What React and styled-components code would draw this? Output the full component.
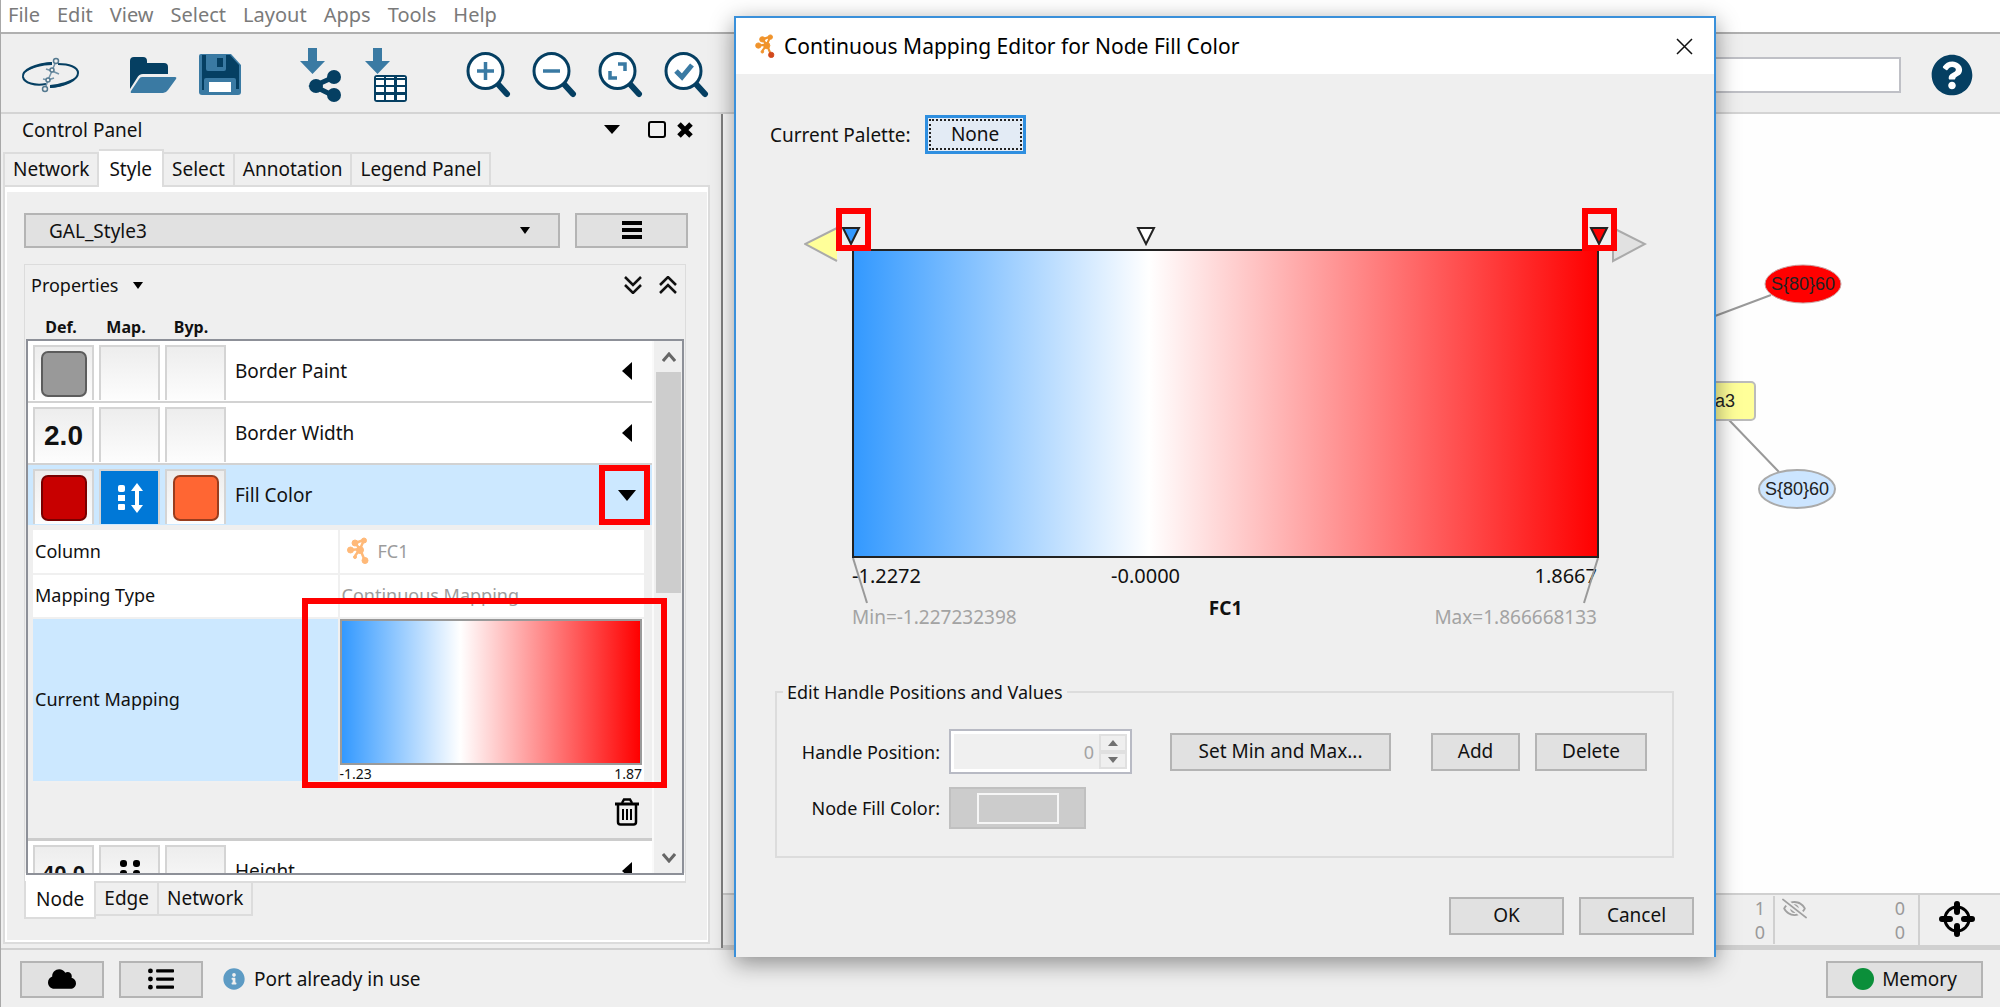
import React from "react";
import styled, { createGlobalStyle, css } from "styled-components";
import { FaCloud, FaListUl, FaInfoCircle, FaQuestionCircle, FaRegEyeSlash } from "react-icons/fa";

const NAVY = "#053f62";
const STEEL = "#3a7aa3";
const FACE = "#efefef";
const LINE = "#dcdcdc";
const GRADIENT = "linear-gradient(to right, #3399ff 0%, #ffffff 39.7%, #ff0000 100%)";

const GlobalStyle = createGlobalStyle`
  *, *::before, *::after { box-sizing: border-box; }
  body { margin: 0; background: ${FACE}; }
  body, button, input, select {
    font-family: "Noto Sans", "Open Sans", sans-serif;
    font-size: 18px;
    line-height: 24px;
    color: #111;
  }
  button, select, input { margin: 0; padding: 0; border-radius: 0; }
  svg { display: block; flex: none; }
`;

const Desktop = styled.div`
  position: relative;
  display: flex;
  flex-direction: column;
  height: 100vh;
  min-height: 1000px;
  border-left: 1px solid #a8a8a8;
  background: ${FACE};
  overflow: hidden;
`;

/* ---------- shared controls ---------- */

const PushButton = styled.button`
  display: flex;
  align-items: center;
  justify-content: center;
  gap: 8px;
  width: ${(p) => (p.$w ? `${p.$w}px` : "auto")};
  height: ${(p) => p.$h || 38}px;
  padding-bottom: 2px;
  border: 2px solid #b4b4b4;
  background: #e1e1e1;
  font-size: 19px;
`;

const PlainButton = styled.button`
  display: flex;
  align-items: center;
  gap: 15px;
  border: 0;
  background: none;
`;

const Highlight = styled.div`
  position: absolute;
  left: ${(p) => p.$left}px;
  top: ${(p) => p.$top}px;
  width: ${(p) => p.$w}px;
  height: ${(p) => p.$h}px;
  border: 6px solid #ff0000;
  pointer-events: none;
  z-index: 2;
`;

/* ---------- menu and toolbar ---------- */

const MenuBar = styled.nav`
  display: flex;
  gap: 17px;
  height: 34px;
  padding: 2px 7px 0;
  background: #fff;
  border-bottom: 2px solid #b0b0b0;
`;

const MenuItem = styled.button`
  border: 0;
  background: none;
  height: 26px;
  font-size: 20px;
  line-height: 26px;
  color: #7a7a7a;
`;

const Toolbar = styled.header`
  display: flex;
  align-items: center;
  height: 80px;
  padding: 3px 27px 0 20px;
  border-bottom: 2px solid #d4d4d4;
`;

const ToolGroup = styled.div`
  display: flex;
  align-items: center;
  gap: ${(p) => p.$gap}px;
  margin-right: ${(p) => p.$after}px;
`;

const SearchBox = styled.input`
  width: 400px;
  height: 36px;
  margin-left: auto;
  margin-right: 30px;
  border: 2px solid #bfc0c6;
  background: #fff;
`;

const HelpIcon = styled(FaQuestionCircle)`
  background: radial-gradient(#fff 55%, transparent 56%);
`;

/* ---------- control panel ---------- */

const Workspace = styled.main`
  display: flex;
  flex: 1;
  min-height: 0;
  border-bottom: 2px solid #d0d0d0;
`;

const Sidebar = styled.aside`
  display: flex;
  flex-direction: column;
  flex: none;
  width: 722px;
  padding: 0 11px 4px 2px;
  border-right: 2px solid #828282;
`;

const PanelHeader = styled.div`
  display: flex;
  align-items: center;
  height: 35px;
  padding: 0 17px 4px 19px;
`;

const PanelTitle = styled.h1`
  flex: 1;
  margin: 0;
  font-size: 19px;
  font-weight: 400;
`;

const HeaderIcons = styled.div`
  display: flex;
  align-items: center;
  gap: ${(p) => p.$gap}px;
`;

const TabStrip = styled.div`
  display: flex;
  align-items: ${(p) => (p.$below ? "flex-start" : "flex-end")};
  z-index: 1;
`;

const Tab = styled.button`
  height: 33px;
  padding: 0 8px;
  border: 2px solid ${LINE};
  border-left-width: ${(p) => (p.$first ? 2 : 0)}px;
  ${(p) => (p.$below ? "border-top: 0;" : "border-bottom: 0;")}
  background: ${FACE};
  white-space: nowrap;
  font-size: 19px;
  line-height: 31px;
  ${(p) =>
    p.$active &&
    css`
      height: 38px;
      padding: 0 10px;
      background: #fff;
      line-height: 32px;
      margin-${p.$below ? "top" : "bottom"}: -2px;
    `}
`;

const TabPage = styled.section`
  display: flex;
  flex-direction: column;
  flex: 1;
  min-height: 0;
  gap: 16px;
  padding: 22px 20px 23px 19px;
  border: 2px solid ${LINE};
  box-shadow: inset 2px 5px 0 #fff, inset -1px -2px 0 #fff;
`;

const StyleRow = styled.div`
  display: flex;
  gap: 15px;
  padding-top: 4px;
`;

const ComboWrap = styled.div`
  display: flex;
  flex: 1;
  position: relative;
`;

const Combo = styled.select`
  appearance: none;
  flex: 1;
  height: 35px;
  padding-left: 23px;
  border: 2px solid #b4b4b4;
  background: #e1e1e1;
  font-size: 19px;
`;

const ComboArrow = styled.span`
  position: absolute;
  right: 30px;
  top: 14px;
  pointer-events: none;
`;

const Burger = styled.span`
  width: 20px;
  height: 18px;
  border-top: 4px solid #000;
  border-bottom: 4px solid #000;
  background: linear-gradient(transparent 3px, #000 3px, #000 7px, transparent 7px);
`;

const PropertyTabs = styled.div`
  display: flex;
  flex-direction: column;
  flex: 1;
  min-height: 0;
`;

const PropertyPage = styled.div`
  display: flex;
  flex-direction: column;
  flex: 1;
  min-height: 0;
  margin-right: 2px;
  padding: 0 1px 6px;
  border: 1px solid ${LINE};
  border-bottom-width: 2px;
  background: linear-gradient(${FACE}, ${FACE}) no-repeat top / 100% calc(100% - 8px), #fff;
`;

const PropertyBar = styled.div`
  display: flex;
  align-items: center;
  justify-content: space-between;
  height: 40px;
  padding: 0 6px 0 5px;
`;

const ColumnHeads = styled.div`
  display: flex;
  align-items: flex-end;
  gap: 5px;
  height: 34px;
  padding-left: 5px;
`;

const ColumnHead = styled.span`
  width: 60px;
  text-align: center;
  font-size: 16px;
  font-weight: 700;
`;

const ListBox = styled.div`
  position: relative;
  display: flex;
  flex: 1;
  min-height: 0;
  border: 2px solid #8d9098;
  background: #fff;
`;

const ListView = styled.div`
  flex: 1;
  min-width: 0;
  overflow: hidden;
`;

const PropertyRow = styled.div`
  display: flex;
  align-items: flex-start;
  gap: 5px;
  height: ${(p) => (p.$selected ? 60 : 62)}px;
  padding: 4px 16px 0 5px;
  background: ${(p) => (p.$selected ? "#cce8ff" : "#fff")};
  border-bottom: ${(p) => (p.$selected ? 0 : 2)}px solid #d2d2d2;
`;

const Cell = styled.button`
  display: flex;
  align-items: center;
  justify-content: center;
  width: 61px;
  height: 55px;
  border: 2px solid #d4d4d4;
  border-bottom: 0;
  background: ${(p) => (p.$on ? "#0078d7" : "linear-gradient(#ededed, #fdfdfd)")};
  font-family: "Liberation Sans", sans-serif;
  font-size: ${(p) => p.$size || 28}px;
  font-weight: 700;
`;

const Swatch = styled.span`
  width: 46px;
  height: 46px;
  border: 2px solid rgba(0, 0, 0, 0.4);
  border-radius: 7px;
  background: ${(p) => p.$color};
`;

const PropertyName = styled.span`
  flex: 1;
  padding-left: 4px;
  font-size: 19px;
  line-height: 52px;
`;

const Toggle = styled.button`
  display: flex;
  justify-content: center;
  align-items: center;
  width: 18px;
  height: 52px;
  border: 0;
  background: none;
`;

const Detail = styled.div`
  height: 316px;
  padding: 5px 8px 0 5px;
  background: ${FACE};
  border-bottom: 3px solid #cccccc;
`;

const MappingTable = styled.table`
  width: 100%;
  table-layout: fixed;
  border-collapse: collapse;
`;

const MapLabel = styled.th`
  height: ${(p) => p.$h}px;
  padding: 0 2px 2px;
  background: ${(p) => (p.$on ? "#cce8ff" : "#fff")};
  border-bottom: 2px solid #f0f0f0;
  font-weight: 400;
  text-align: left;
`;

const MapValue = styled.td`
  padding: 0 2px 2px;
  background: #fff;
  border-left: 2px solid #f0f0f0;
  border-bottom: 2px solid #f0f0f0;
  color: #9c9c9c;
  vertical-align: ${(p) => (p.$top ? "top" : "middle")};
  ${(p) => p.$top && "padding: 0;"}
`;

const Inline = styled.span`
  display: flex;
  align-items: center;
  gap: 8px;
  padding-left: 4px;
`;

const MiniGradient = styled.div`
  height: 146px;
  margin: 0 2px 0 0;
  border: 2px solid #9a9a9a;
  background: ${GRADIENT};
`;

const MiniScale = styled.div`
  display: flex;
  justify-content: space-between;
  height: 16px;
  padding-right: 2px;
  color: #111;
  font-size: 14px;
  line-height: 18px;
`;

const TrashButton = styled.button`
  display: flex;
  margin: 15px 4px 0 auto;
  border: 0;
  background: none;
`;

const Scrollbar = styled.div`
  display: flex;
  flex-direction: column;
  align-items: center;
  width: 30px;
  padding: 11px 1px 10px 2px;
  background: ${FACE};
  border-left: 2px solid #fafafa;
`;

const Thumb = styled.div`
  width: 100%;
  height: 221px;
  margin: 9px 0 auto;
  background: #cdcdcd;
`;

/* ---------- network view ---------- */

const NetworkArea = styled.section`
  display: flex;
  flex-direction: column;
  flex: 1;
  min-width: 0;
`;

const Canvas = styled.div`
  flex: 1;
  min-height: 0;
  background: #fefefe;
  svg { width: 100%; height: 100%; }
  text { font-family: "Liberation Sans", Arial, sans-serif; font-size: 18px; fill: #222; }
`;

const CountBar = styled.div`
  display: flex;
  justify-content: flex-end;
  align-items: center;
  height: 55px;
  border-top: 2px solid #d0d0d0;
  border-bottom: 3px solid #d0d0d0;
  color: #9a9a9a;
`;

const Counts = styled.div`
  display: grid;
  grid-template-columns: 26px 1fr;
  width: ${(p) => p.$w}px;
  padding: 0 ${(p) => p.$pad}px 0 7px;
  border-left: ${(p) => (p.$rule ? 2 : 0)}px solid #d0d0d0;
  text-align: right;
  line-height: 24px;
  svg { grid-row: span 2; }
  span { grid-column: 2; }
`;

const TargetButton = styled.button`
  display: flex;
  align-items: center;
  justify-content: center;
  align-self: stretch;
  width: 82px;
  padding: 0 6px 2px 0;
  border: 0;
  border-left: 2px solid #d0d0d0;
  background: none;
`;

const StatusBar = styled.footer`
  display: flex;
  align-items: center;
  gap: 15px;
  height: 57px;
  padding: 2px 17px 0 19px;
`;

const StatusText = styled.span`
  display: flex;
  align-items: center;
  gap: 9px;
  flex: 1;
  padding: 0 0 2px 5px;
  font-size: 19px;
`;

/* ---------- mapping editor dialog ---------- */

const Dialog = styled.section`
  position: absolute;
  left: 733px;
  top: 16px;
  width: 982px;
  border: 2px solid #3a90da;
  border-bottom: 0;
  background: ${FACE};
  box-shadow: 0 6px 22px rgba(0, 0, 0, 0.42);
  z-index: 5;
`;

const TitleBar = styled.header`
  display: flex;
  align-items: center;
  height: 56px;
  padding: 0 21px 0 19px;
  background: #fff;
`;

const DialogTitle = styled.h2`
  flex: 1;
  margin: 0 0 0 9px;
  font-size: 21px;
  font-weight: 400;
  color: #000;
`;

const PaletteRow = styled.div`
  display: flex;
  align-items: center;
  justify-content: flex-start;
  gap: 14px;
  padding: 41px 34px 0;
  font-size: 19px;
`;

const FocusButton = styled(PushButton)`
  border: 3px solid #2f8fe0;
  background: #e3ebf5;
  outline: 2px dotted #222;
  outline-offset: -6px;
`;

const Editor = styled.div`
  position: relative;
  margin: 95px 115px 0 116px;
`;

const BigGradient = styled.div`
  height: 309px;
  border: 2px solid #222;
  background: ${GRADIENT};
`;

const Handle = styled.button`
  position: absolute;
  left: ${(p) => p.$at};
  top: -23px;
  width: 20px;
  height: 20px;
  margin-left: -10px;
  border: 0;
  background: none;
`;

const EndHandle = styled.button`
  position: absolute;
  top: -22px;
  ${(p) => p.$side}: -48px;
  border: 0;
  background: none;
`;

const Leader = styled.svg`
  position: absolute;
  top: 309px;
  ${(p) => p.$side}: 0;
`;

const ScaleLabels = styled.div`
  position: relative;
  display: flex;
  justify-content: space-between;
  padding: 6px 2px 0 0;
  font-size: 20px;
`;

const MidLabel = styled.span`
  position: absolute;
  left: 39.3%;
  transform: translateX(-50%);
`;

const RangeLabels = styled.div`
  display: flex;
  justify-content: space-between;
  padding: 8px 2px 0 0;
  font-size: 19px;
`;

const RangeLabel = styled.span`
  padding-top: 9px;
  color: #a3a3a3;
`;

const ColumnName = styled.strong`
  font-weight: 700;
`;

const Group = styled.fieldset`
  display: flex;
  flex-direction: column;
  gap: 13px;
  margin: 51px 40px 0 39px;
  padding: 25px 25px 27px 22px;
  border: 2px solid ${LINE};
`;

const GroupTitle = styled.legend`
  padding: 0 4px;
  margin-left: -16px;
`;

const FieldRow = styled.div`
  display: flex;
  align-items: center;
`;

const FieldLabel = styled.label`
  width: 141px;
  margin-right: 9px;
  text-align: right;
`;

const Spinner = styled.div`
  display: flex;
  width: 183px;
  height: 45px;
  margin-right: 38px;
  padding: 3px;
  border: 2px solid #b8bac4;
  background: #fff;
`;

const SpinInput = styled.input`
  flex: 1;
  min-width: 0;
  padding-right: 5px;
  border: 0;
  background: #f0f0f0;
  text-align: right;
  color: #a3a3a3;
`;

const SpinButtons = styled.div`
  display: flex;
  flex-direction: column;
`;

const SpinButton = styled.button`
  display: flex;
  align-items: center;
  justify-content: center;
  flex: 1;
  width: 28px;
  border: 2px solid #e0e0e0;
  background: #efefef;
`;

const PairEnd = styled.div`
  display: flex;
  gap: 15px;
  margin-left: auto;
`;

const ColorButton = styled.button`
  display: flex;
  align-items: center;
  justify-content: center;
  width: 137px;
  height: 42px;
  border: 2px solid #c0c0c0;
  background: #cccccc;
  span { width: 82px; height: 31px; border: 2px solid #f6f6f6; }
`;

const DialogButtons = styled.div`
  display: flex;
  justify-content: flex-end;
  gap: 15px;
  padding: 39px 20px 22px;
`;

/* ---------- drawings ---------- */

const LogoIcon = () => (
  <svg width="60" height="36" viewBox="0 0 60 36" fill="none">
    <path d="M31 6C14 7 1 13 2 20c1 6 12 9 23 7" stroke={NAVY} strokeWidth="2" />
    <path d="M31 5C20 6 8 10 5 15c6-4 16-7 26-7z" fill={NAVY} />
    <path d="M37 7c11 0 20 3 20 9 0 7-13 13-28 14" stroke={NAVY} strokeWidth="2" />
    <path d="M29 31c12-1 22-5 26-11-6 4-16 7-26 8z" fill={NAVY} />
    <path d="M35 4 31 14l-4 9-3 9M31 14l-6-2M31 14l7 3M27 23l6-2M27 23l-5-1" stroke="#7393a8" strokeWidth="1.5" />
    <g fill={FACE} stroke="#54798f" strokeWidth="1.5">
      <circle cx="35" cy="4" r="2.5" />
      <circle cx="31" cy="13" r="2" />
      <circle cx="27" cy="23" r="2" />
      <circle cx="24" cy="32" r="2.5" />
    </g>
  </svg>
);

const FolderIcon = () => (
  <svg width="48" height="38" viewBox="0 0 48 38">
    <path d="M1 33V5q0-4 4-4h9q4 0 4 4v2h17q4 0 4 4v7H14q-4 0-6 4z" fill={NAVY} />
    <path d="M13 21h33q2 0 1 2l-8 11q-2 3-5 3H3q-2 0-1-2l8-12q1-2 3-2z" fill={STEEL} />
  </svg>
);

const SaveIcon = () => (
  <svg width="44" height="43" viewBox="0 0 44 43">
    <path d="M3 1h30l10 11v27q0 3-3 3H4q-3 0-3-3V3q0-2 2-2z" fill={STEEL} />
    <path d="M4 2h4v14q0 2 2 2h16q2 0 2-2V2h4l9 10v24h-3V27q0-2-2-2H8q-2 0-2 2v10H4z" fill={NAVY} />
    <path d="M19 5h6v9h-6z" fill={NAVY} />
    <path d="M8 26h28v14H8z" fill={STEEL} />
    <path d="M11 29h22v10H11z" fill="#fff" />
  </svg>
);

const ImportNetworkIcon = () => (
  <svg width="43" height="56" viewBox="0 0 43 56">
    <path d="M9 1h9v13h8L13.500 27 1 14h8z" fill={STEEL} />
    <path d="M35 30 15 39l20 10" stroke={NAVY} strokeWidth="5" fill="none" />
    <circle cx="35" cy="30" r="7" fill={NAVY} />
    <circle cx="17" cy="39" r="7" fill={NAVY} />
    <circle cx="35" cy="48" r="7" fill={NAVY} />
  </svg>
);

const ImportTableIcon = () => (
  <svg width="44" height="56" viewBox="0 0 44 56">
    <path d="M9 1h9v13h8L13.500 27 1 14h8z" fill={STEEL} />
    <rect x="10" y="28" width="33" height="27" rx="3" fill={NAVY} />
    <g fill="#fff">
      {[12, 22, 33].map((x) => [33, 40, 48].map((y) => <rect key={x + "-" + y} x={x} y={y} width="8" height="5" />))}
      <path d="M12 30h8v1h-8zM22 30h8v1h-8zM33 30h8v1h-8z" />
    </g>
  </svg>
);

const LensIcon = ({ children }) => (
  <svg width="45" height="47" viewBox="0 0 45 47" fill="none">
    <path d="m31 32 10 11" stroke={NAVY} strokeWidth="6" strokeLinecap="round" />
    <circle cx="19.500" cy="20" r="17.500" fill="#fff" stroke={NAVY} strokeWidth="3" />
    <g stroke={STEEL} strokeWidth="3.500">{children}</g>
  </svg>
);

const Tri = ({ dir, w = 12, h = 8, fill = "#000" }) => {
  const shapes = {
    down: `0,0 ${w},0 ${w / 2},${h}`,
    up: `0,${h} ${w},${h} ${w / 2},0`,
    left: `${w},0 ${w},${h} 0,${h / 2}`,
  };
  return (
    <svg width={w} height={h} viewBox={`0 0 ${w} ${h}`}>
      <polygon points={shapes[dir]} fill={fill} />
    </svg>
  );
};

const ChevronPair = ({ up }) => (
  <svg width="20" height="18" viewBox="0 0 20 18" fill="none" stroke="#111" strokeWidth="2.500">
    {up ? <path d="m2 9 8-8 8 8M2 17l8-8 8 8" /> : <path d="m2 1 8 8 8-8M2 9l8 8 8-8" />}
  </svg>
);

const ScrollChevron = ({ up }) => (
  <svg width="14" height="11" viewBox="0 0 14 11" fill="none" stroke="#666" strokeWidth="3">
    <path d={up ? "m1 9 6-7 6 7" : "m1 2 6 7 6-7"} />
  </svg>
);

const TrashIcon = () => (
  <svg width="26" height="28" viewBox="0 0 26 28" fill="none" stroke="#000">
    <path d="M1 6h24" strokeWidth="3" />
    <path d="M8 5l2-3.500h6L18 5" strokeWidth="2.500" />
    <path d="M4 7v17q0 2.500 2.500 2.500h13Q22 26.500 22 24V7" strokeWidth="2.500" />
    <path d="M9 11v11M13 11v11M17 11v11" strokeWidth="2" />
  </svg>
);

const NetworkGlyph = ({ width, height, color, tail }) => (
  <svg width={width} height={height} viewBox="0 0 22 27" fill={color} stroke={color}>
    <path d="m4 13 9-1M8 6l5 6M8 6l9-3M17 3l-4 9M13 12 8 19M13 12l5 12" strokeWidth="2.500" />
    <circle cx="3.500" cy="13" r="3" />
    <circle cx="8" cy="6" r="3" />
    <circle cx="17" cy="3.500" r="2.500" />
    <circle cx="13" cy="13" r="3.500" />
    <circle cx="8" cy="20" r="1.500" />
    <circle cx="18" cy="23.500" r="3" fill={tail || color} stroke={tail || color} />
  </svg>
);

const ContinuousIcon = () => (
  <svg width="26" height="30" viewBox="0 0 26 30" fill="#fff">
    <rect x="1" y="2" width="7" height="7" rx="2" />
    <rect x="1" y="12" width="7" height="6" />
    <rect x="1" y="21" width="7" height="6" rx="1" />
    <path d="M20 0l6 8h-4v14h4l-6 8-6-8h4V8h-4z" />
  </svg>
);

const DiscreteIcon = () => (
  <svg width="22" height="28" viewBox="0 0 22 28" fill="#000">
    {[0, 10, 20].map((y) => (
      <g key={y}>
        <rect x="1" y={y} width="7" height="7" rx="3" />
        <rect x="14" y={y} width="7" height="7" rx="3" />
      </g>
    ))}
  </svg>
);

const TargetIcon = () => (
  <svg width="36" height="36" viewBox="0 0 36 36" fill="none" stroke="#000">
    <circle cx="18" cy="18" r="12" strokeWidth="3" />
    <path d="M18 3v8M18 25v8M3 18h8M25 18h8" strokeWidth="6" strokeLinecap="round" />
  </svg>
);

const HandleMark = ({ fill }) => (
  <svg width="20" height="20" viewBox="0 0 20 20">
    <path d="M2 2h16L10 18z" fill={fill} stroke="#222" strokeWidth="2" />
  </svg>
);

/* ---------- sections ---------- */

const menus = ["File", "Edit", "View", "Select", "Layout", "Apps", "Tools", "Help"];

function ControlPanel() {
  return (
    <Sidebar>
      <PanelHeader>
        <PanelTitle>Control Panel</PanelTitle>
        <HeaderIcons $gap={11}>
          <PlainButton aria-label="Panel menu"><Tri dir="down" w={16} h={9} /></PlainButton>
          <PlainButton aria-label="Float panel">
            <svg width="35" height="18" viewBox="0 0 35 18" fill="none" stroke="#000">
              <rect x="18" y="1" width="16" height="15" rx="2" strokeWidth="2" />
            </svg>
          </PlainButton>
          <PlainButton aria-label="Close panel">
            <svg width="16" height="16" viewBox="0 0 16 16"><path d="M2 2l12 12M14 2 2 14" stroke="#000" strokeWidth="5" /></svg>
          </PlainButton>
        </HeaderIcons>
      </PanelHeader>
      <TabStrip>
        {["Network", "Style", "Select", "Annotation", "Legend Panel"].map((t, i) => (
          <Tab key={t} $first={i === 0} $active={t === "Style"}>{t}</Tab>
        ))}
      </TabStrip>
      <TabPage>
        <StyleRow>
          <ComboWrap>
            <Combo aria-label="Style" defaultValue="GAL_Style3"><option>GAL_Style3</option></Combo>
            <ComboArrow><Tri dir="down" w={10} h={7} /></ComboArrow>
          </ComboWrap>
          <PushButton $w={113} $h={35} aria-label="Style options"><Burger /></PushButton>
        </StyleRow>
        <PropertyTabs>
          <PropertyPage>
            <PropertyBar>
              <PlainButton>Properties <Tri dir="down" w={10} h={7} /></PlainButton>
              <HeaderIcons $gap={15}>
                <PlainButton aria-label="Expand all"><ChevronPair /></PlainButton>
                <PlainButton aria-label="Collapse all"><ChevronPair up /></PlainButton>
              </HeaderIcons>
            </PropertyBar>
            <ColumnHeads>
              <ColumnHead>Def.</ColumnHead>
              <ColumnHead>Map.</ColumnHead>
              <ColumnHead>Byp.</ColumnHead>
            </ColumnHeads>
            <ListBox>
              <ListView>
                <PropertyRow>
                  <Cell aria-label="Border Paint default"><Swatch $color="#999999" /></Cell>
                  <Cell aria-label="Border Paint mapping" />
                  <Cell aria-label="Border Paint bypass" />
                  <PropertyName>Border Paint</PropertyName>
                  <Toggle aria-label="Expand Border Paint"><Tri dir="left" w={10} h={18} /></Toggle>
                </PropertyRow>
                <PropertyRow>
                  <Cell>2.0</Cell>
                  <Cell aria-label="Border Width mapping" />
                  <Cell aria-label="Border Width bypass" />
                  <PropertyName>Border Width</PropertyName>
                  <Toggle aria-label="Expand Border Width"><Tri dir="left" w={10} h={18} /></Toggle>
                </PropertyRow>
                <PropertyRow $selected>
                  <Cell aria-label="Fill Color default"><Swatch $color="#c80000" /></Cell>
                  <Cell $on aria-label="Fill Color mapping"><ContinuousIcon /></Cell>
                  <Cell aria-label="Fill Color bypass"><Swatch $color="#ff6633" /></Cell>
                  <PropertyName>Fill Color</PropertyName>
                  <Toggle aria-label="Collapse Fill Color"><Tri dir="down" w={18} h={11} /></Toggle>
                </PropertyRow>
                <Detail>
                  <MappingTable>
                    <tbody>
                      <tr>
                        <MapLabel $h={44} scope="row">Column</MapLabel>
                        <MapValue>
                          <Inline><NetworkGlyph width={24} height={27} color="#ffb978" />FC1</Inline>
                        </MapValue>
                      </tr>
                      <tr>
                        <MapLabel $h={44} scope="row">Mapping Type</MapLabel>
                        <MapValue>Continuous Mapping</MapValue>
                      </tr>
                      <tr>
                        <MapLabel $h={162} $on scope="row">Current Mapping</MapLabel>
                        <MapValue $top>
                          <MiniGradient />
                          <MiniScale><span>-1.23</span><span>1.87</span></MiniScale>
                        </MapValue>
                      </tr>
                    </tbody>
                  </MappingTable>
                  <TrashButton aria-label="Remove mapping"><TrashIcon /></TrashButton>
                </Detail>
                <PropertyRow>
                  <Cell $size={22}>40.0</Cell>
                  <Cell aria-label="Height mapping"><DiscreteIcon /></Cell>
                  <Cell aria-label="Height bypass" />
                  <PropertyName>Height</PropertyName>
                  <Toggle aria-label="Expand Height"><Tri dir="left" w={10} h={18} /></Toggle>
                </PropertyRow>
              </ListView>
              <Scrollbar>
                <ScrollChevron up />
                <Thumb />
                <ScrollChevron />
              </Scrollbar>
              <Highlight $left={571} $top={124} $w={51} $h={60} />
              <Highlight $left={274} $top={257} $w={365} $h={190} />
            </ListBox>
          </PropertyPage>
          <TabStrip $below>
            {["Node", "Edge", "Network"].map((t, i) => (
              <Tab key={t} $below $first={i === 0} $active={i === 0}>{t}</Tab>
            ))}
          </TabStrip>
        </PropertyTabs>
      </TabPage>
    </Sidebar>
  );
}

function NetworkView() {
  return (
    <NetworkArea>
      <Canvas>
        <svg>
          <g stroke="#999" strokeWidth="2">
            <path d="M960 214 1048 181M1006 306l50 52" />
            <rect x="940" y="268" width="92" height="38" rx="4" fill="#ffff99" stroke="#bbb" />
            <ellipse cx="1080" cy="170" rx="38" ry="19" fill="#ff0000" stroke="#c9a0a0" strokeWidth="1" />
            <ellipse cx="1074" cy="375" rx="38" ry="19" fill="#cce5ff" stroke="#aaa" />
          </g>
          <text x="1080" y="176" textAnchor="middle">{"S{80}60"}</text>
          <text x="992" y="293">a3</text>
          <text x="1074" y="381" textAnchor="middle">{"S{80}60"}</text>
        </svg>
      </Canvas>
      <CountBar>
        <Counts $w={70} $pad={8}><span>1</span><span>0</span></Counts>
        <Counts $w={145} $pad={13} $rule>
          <FaRegEyeSlash size={25} color="#a0a0a0" />
          <span>0</span><span>0</span>
        </Counts>
        <TargetButton aria-label="Fit network"><TargetIcon /></TargetButton>
      </CountBar>
    </NetworkArea>
  );
}

function MappingEditor() {
  return (
    <Dialog role="dialog" aria-labelledby="editor-title">
      <TitleBar>
        <NetworkGlyph width={20} height={24} color="#f0932b" tail="#d2491c" />
        <DialogTitle id="editor-title">Continuous Mapping Editor for Node Fill Color</DialogTitle>
        <PlainButton aria-label="Close">
          <svg width="17" height="17" viewBox="0 0 17 17"><path d="M1 1l15 15M16 1 1 16" stroke="#111" strokeWidth="1.500" /></svg>
        </PlainButton>
      </TitleBar>
      <PaletteRow>
        <span>Current Palette:</span>
        <FocusButton $w={101} $h={39}>None</FocusButton>
      </PaletteRow>
      <Editor>
        <BigGradient />
        <EndHandle $side="left" aria-label="Below minimum">
          <svg width="34" height="36" viewBox="0 0 34 36"><path d="M33 1 1 17l32 17" fill="#ffff99" stroke="#aaa" strokeWidth="2" /></svg>
        </EndHandle>
        <EndHandle $side="right" aria-label="Above maximum">
          <svg width="36" height="36" viewBox="0 0 36 36"><path d="M2 1l32 16L2 34z" fill="#e1e1e1" stroke="#aaa" strokeWidth="2" /></svg>
        </EndHandle>
        <Handle $at="-1px" aria-label="Minimum handle"><HandleMark fill="#3399ff" /></Handle>
        <Handle $at="39.4%" aria-label="Middle handle"><HandleMark fill="#fff" /></Handle>
        <Handle $at="100%" aria-label="Maximum handle"><HandleMark fill="#ff0000" /></Handle>
        <Highlight $left={-16} $top={-41} $w={35} $h={43} />
        <Highlight $left={730} $top={-41} $w={35} $h={43} />
        <ScaleLabels>
          <span>-1.2272</span>
          <MidLabel>-0.0000</MidLabel>
          <span>1.8667</span>
        </ScaleLabels>
        <RangeLabels>
          <RangeLabel>Min=-1.227232398</RangeLabel>
          <ColumnName>FC1</ColumnName>
          <RangeLabel>Max=1.866668133</RangeLabel>
        </RangeLabels>
        <Leader $side="left" width="17" height="46"><path d="M1 0l14 45" stroke="#999" strokeWidth="2" /></Leader>
        <Leader $side="right" width="17" height="46"><path d="M16 0 2 45" stroke="#999" strokeWidth="2" /></Leader>
      </Editor>
      <Group>
        <GroupTitle>Edit Handle Positions and Values</GroupTitle>
        <FieldRow>
          <FieldLabel htmlFor="handle-position">Handle Position:</FieldLabel>
          <Spinner>
            <SpinInput id="handle-position" defaultValue="0" disabled />
            <SpinButtons>
              <SpinButton aria-label="Increase"><Tri dir="up" w={10} h={6} fill="#707070" /></SpinButton>
              <SpinButton aria-label="Decrease"><Tri dir="down" w={10} h={6} fill="#707070" /></SpinButton>
            </SpinButtons>
          </Spinner>
          <PushButton $w={221}>Set Min and Max...</PushButton>
          <PairEnd>
            <PushButton $w={89}>Add</PushButton>
            <PushButton $w={112}>Delete</PushButton>
          </PairEnd>
        </FieldRow>
        <FieldRow>
          <FieldLabel htmlFor="fill-color">Node Fill Color:</FieldLabel>
          <ColorButton id="fill-color" disabled><span /></ColorButton>
        </FieldRow>
      </Group>
      <DialogButtons>
        <PushButton $w={115}>OK</PushButton>
        <PushButton $w={115}>Cancel</PushButton>
      </DialogButtons>
    </Dialog>
  );
}

export default function App() {
  return (
    <Desktop>
      <GlobalStyle />
      <MenuBar>{menus.map((m) => <MenuItem key={m}>{m}</MenuItem>)}</MenuBar>
      <Toolbar>
        <ToolGroup $after={48}><LogoIcon /></ToolGroup>
        <ToolGroup $gap={21} $after={57}><FolderIcon /><SaveIcon /></ToolGroup>
        <ToolGroup $gap={22} $after={58}><ImportNetworkIcon /><ImportTableIcon /></ToolGroup>
        <ToolGroup $gap={21} $after={20}>
          <LensIcon><path d="M11 20h17M19.500 11v18" /></LensIcon>
          <LensIcon><path d="M11 20h17" /></LensIcon>
          <LensIcon><path d="M20 13h7v7M12 20v7h7" /></LensIcon>
          <LensIcon><path d="m12 20 6 6 10-12" strokeWidth="5" /></LensIcon>
        </ToolGroup>
        <SearchBox aria-label="Search" />
        <HelpIcon size={42} color={NAVY} />
      </Toolbar>
      <Workspace>
        <ControlPanel />
        <NetworkView />
      </Workspace>
      <StatusBar>
        <PushButton $w={84} $h={37} aria-label="Cloud"><FaCloud size={28} color="#000" /></PushButton>
        <PushButton $w={84} $h={37} aria-label="Tasks"><FaListUl size={26} color="#000" /></PushButton>
        <StatusText><FaInfoCircle size={22} color="#5d9bc4" />Port already in use</StatusText>
        <PushButton $w={157} $h={37}>
          <svg width="22" height="22"><circle cx="11" cy="11" r="11" fill="#0b8f3a" /></svg>
          Memory
        </PushButton>
      </StatusBar>
      <MappingEditor />
    </Desktop>
  );
}
